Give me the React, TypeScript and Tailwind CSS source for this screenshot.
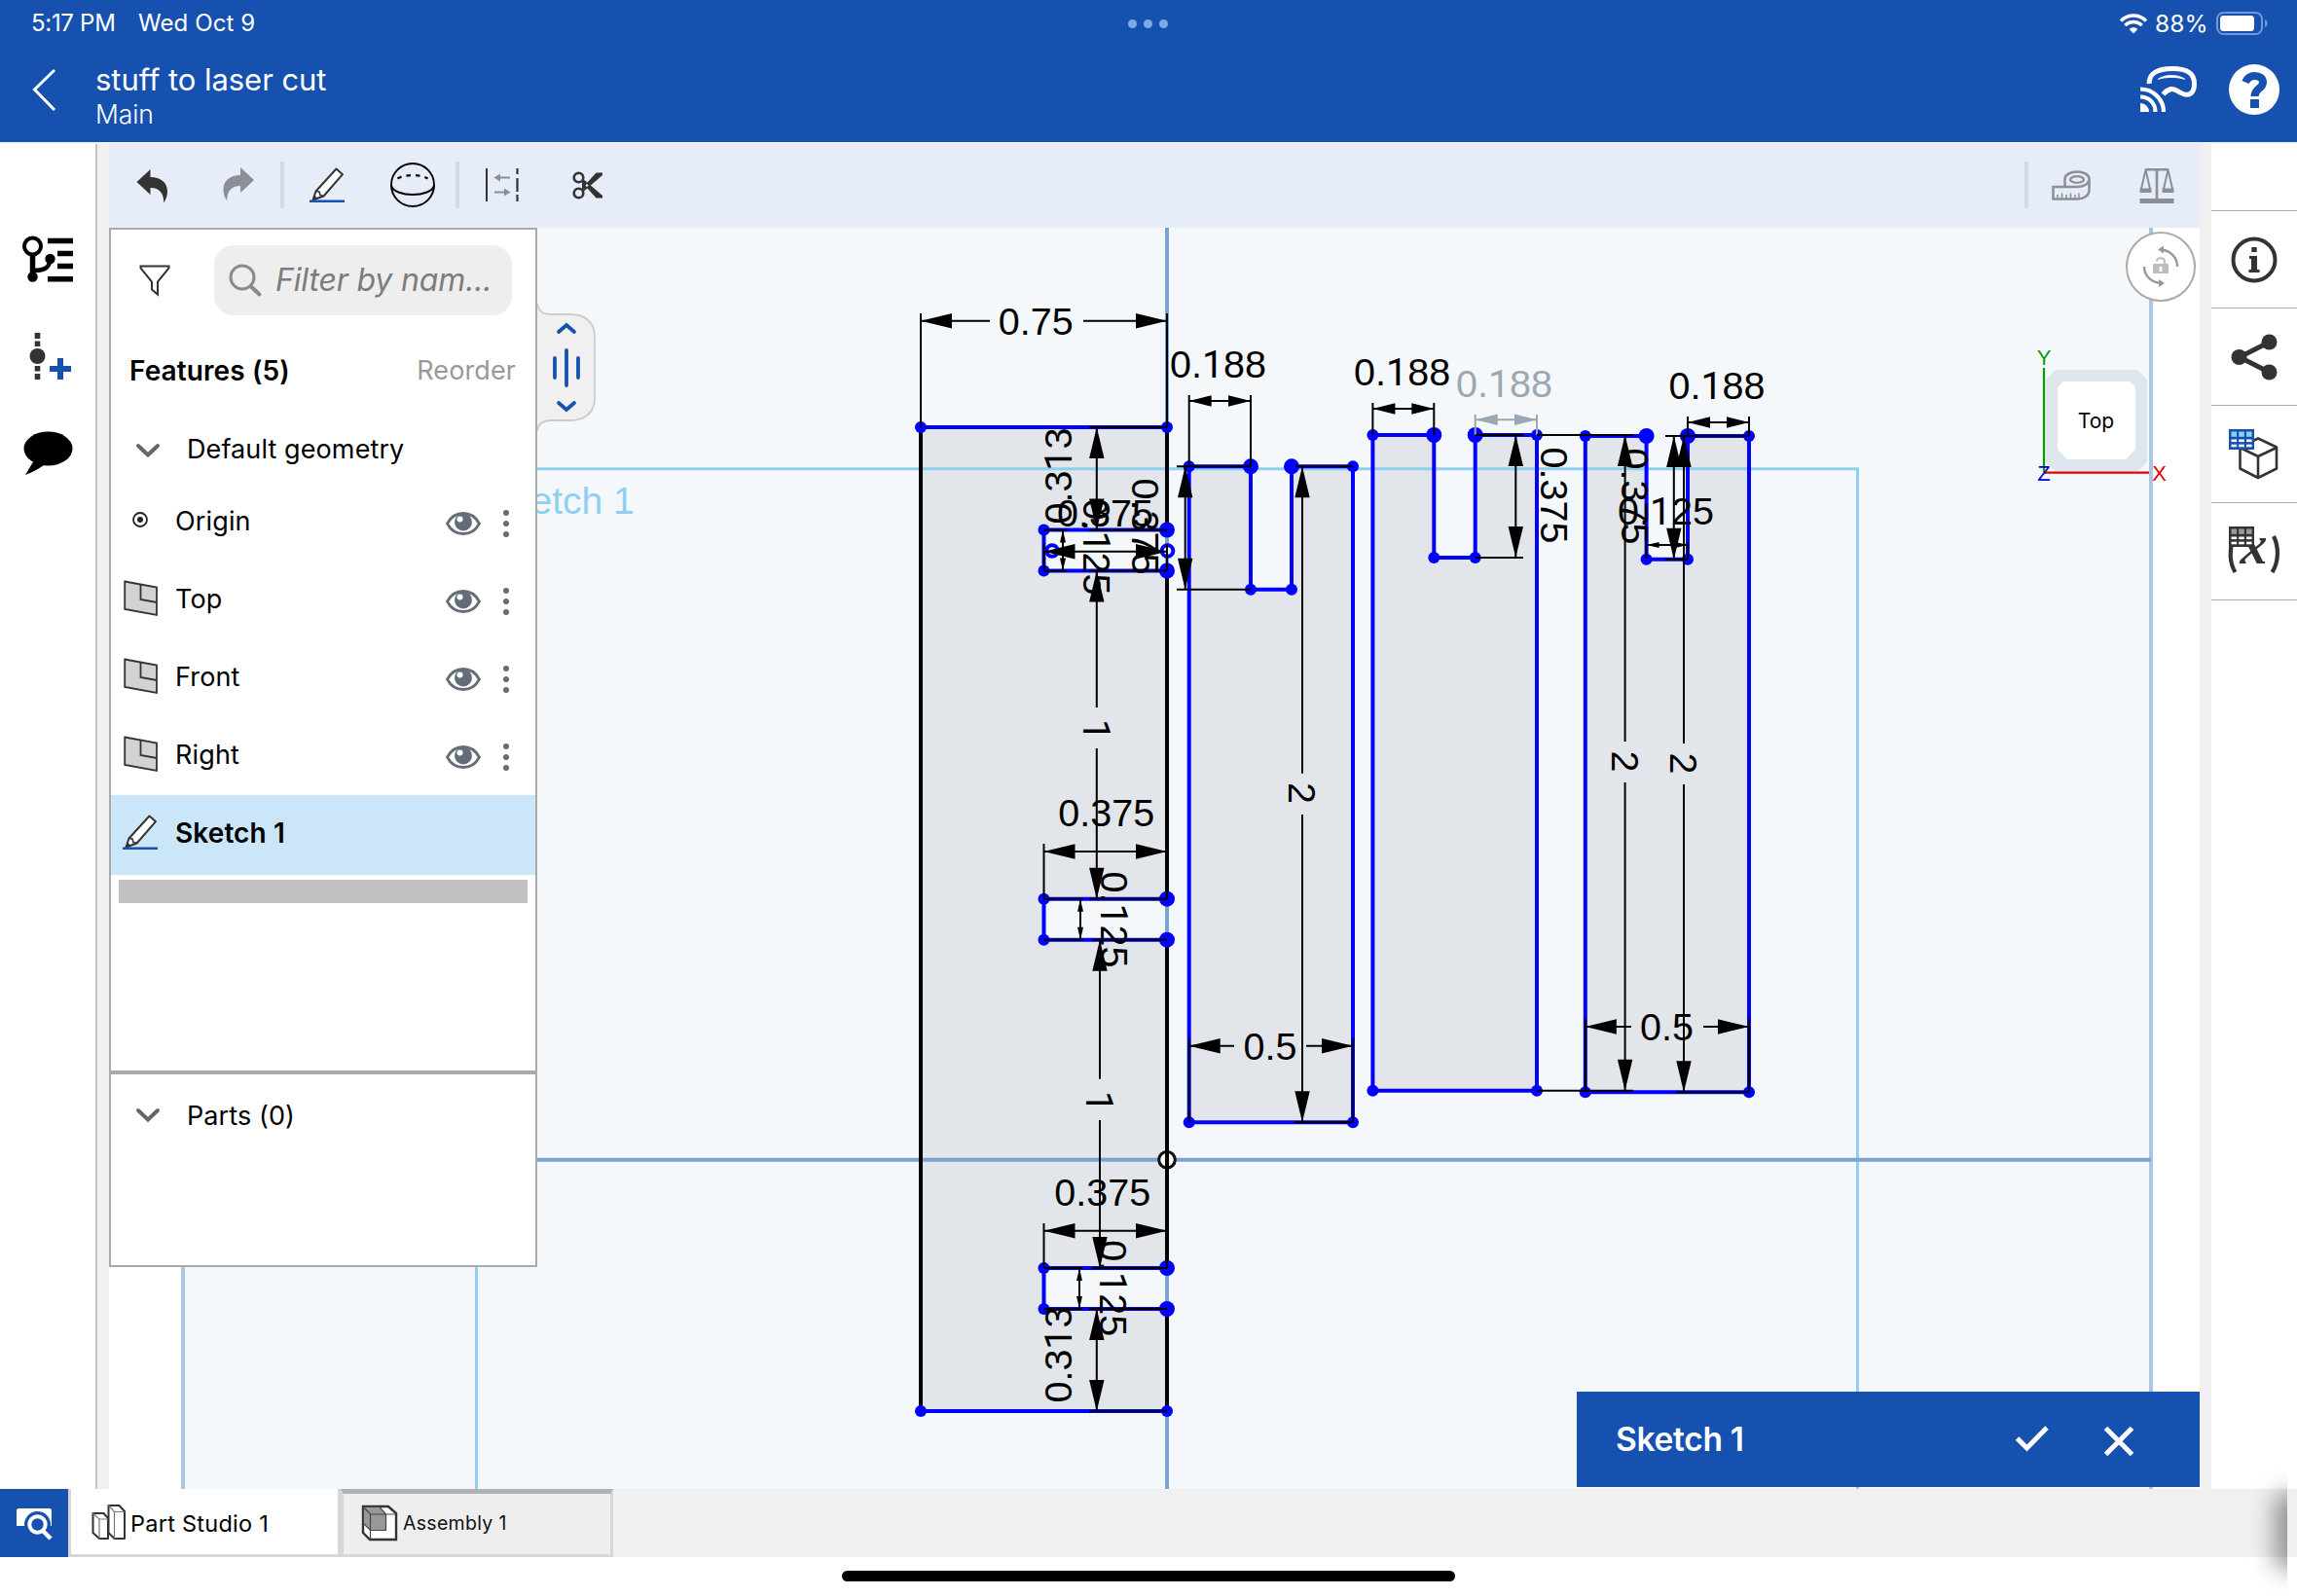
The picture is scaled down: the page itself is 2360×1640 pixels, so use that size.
import type { ReactNode } from "react";

type Pt = [number, number];

/* ---------- Sketch geometry ---------- */

const SLOTS: Pt[] = [
  [544.5, 586.5],
  [923.7, 965.7],
  [1303, 1345],
];

interface Piece {
  l: number;
  nl: number;
  nr: number;
  r: number;
  t: number;
  nb: number;
  b: number;
}

const PIECES: Piece[] = [
  { l: 1221.7, nl: 1285, nr: 1327, r: 1390, t: 479.3, nb: 605.7, b: 1153.3 },
  { l: 1410.4, nl: 1473.3, nr: 1515.7, r: 1579, t: 447, nb: 573, b: 1120.7 },
  { l: 1628.8, nl: 1691.6, nr: 1734, r: 1797, t: 448, nb: 574.7, b: 1122.3 },
];

type Size = "lg" | "sm" | "xs";
const ARROW: Record<Size, Pt> = { lg: [32, 7.7], sm: [23, 5.7], xs: [13, 3] };

interface Dim {
  dir: "h" | "v";
  at: number;
  from: number;
  to: number;
  size: Size;
  gap?: Pt;
  ext: [number, number, number][];
  text: string;
  tx: number;
  ty: number;
  rot?: number;
  color?: string;
}

/* ext entries: [position of the witness line, start, end] */
const DIMS: Dim[] = [
  { dir: "h", at: 329.7, from: 946, to: 1199, size: "lg", gap: [1017, 1113], ext: [[946, 322, 439], [1199, 322, 439]], text: "0.75", tx: 1064.3, ty: 343.5 },
  { dir: "h", at: 412, from: 1221.7, to: 1285, size: "sm", ext: [[1221.7, 406, 479], [1285, 406, 479]], text: "0.188", tx: 1251.5, ty: 388 },
  { dir: "v", at: 1126.8, from: 439, to: 544.5, size: "lg", ext: [[439, 1119, 1199], [544.5, 1119, 1199]], text: "0.313", tx: 1101.3, ty: 489, rot: -90 },
  { dir: "v", at: 1092, from: 544.5, to: 586.5, size: "xs", ext: [[544.5, 1072.5, 1096], [586.5, 1072.5, 1096]], text: "0.125", tx: 1113, ty: 562, rot: 90 },
  { dir: "h", at: 566.7, from: 1072.5, to: 1199, size: "lg", ext: [[1072.5, 559, 586], [1199, 559, 586]], text: "0.375", tx: 1135.5, ty: 541 },
  { dir: "v", at: 1217.7, from: 479.3, to: 605.7, size: "lg", ext: [[479.3, 1209, 1285], [605.7, 1209, 1285]], text: "0.375", tx: 1163.3, ty: 541, rot: 90 },
  { dir: "v", at: 1126.8, from: 586.5, to: 923.7, size: "lg", gap: [727, 769], ext: [[586.5, 1119, 1199], [923.7, 1119, 1199]], text: "1", tx: 1113, ty: 750, rot: 90 },
  { dir: "v", at: 1130, from: 965.7, to: 1303, size: "lg", gap: [1108.7, 1151], ext: [[965.7, 1122, 1199], [1303, 1122, 1199]], text: "1", tx: 1116, ty: 1132, rot: 90 },
  { dir: "h", at: 875, from: 1072.5, to: 1199, size: "lg", ext: [[1072.5, 867, 923.7], [1199, 867, 923.7]], text: "0.375", tx: 1136.7, ty: 849 },
  { dir: "v", at: 1110, from: 923.7, to: 965.7, size: "xs", ext: [[923.7, 1072.5, 1113], [965.7, 1072.5, 1113]], text: "0.125", tx: 1131, ty: 945, rot: 90 },
  { dir: "h", at: 1264.7, from: 1072.5, to: 1199, size: "lg", ext: [[1072.5, 1257, 1303], [1199, 1257, 1303]], text: "0.375", tx: 1132.7, ty: 1238.7 },
  { dir: "v", at: 1109, from: 1303, to: 1345, size: "xs", ext: [[1303, 1072.5, 1112], [1345, 1072.5, 1112]], text: "0.125", tx: 1130, ty: 1323.7, rot: 90 },
  { dir: "v", at: 1126.8, from: 1345, to: 1450, size: "lg", ext: [[1345, 1119, 1199], [1450, 1119, 1199]], text: "0.313", tx: 1101.3, ty: 1392, rot: -90 },
  { dir: "v", at: 1338, from: 479.3, to: 1153.3, size: "lg", gap: [794.7, 837], ext: [[479.3, 1331, 1390], [1153.3, 1330, 1390]], text: "2", tx: 1323.7, ty: 815, rot: 90 },
  { dir: "h", at: 1074.7, from: 1221.7, to: 1390, size: "lg", gap: [1268, 1342], ext: [[1221.7, 1067, 1153], [1390, 1067, 1153]], text: "0.5", tx: 1305, ty: 1089 },
  { dir: "h", at: 420, from: 1410.4, to: 1473.3, size: "sm", ext: [[1410.4, 414, 447], [1473.3, 414, 447]], text: "0.188", tx: 1440.6, ty: 396.3 },
  { dir: "h", at: 431.3, from: 1515.7, to: 1579, size: "sm", ext: [[1515.7, 426, 447], [1579, 426, 447]], text: "0.188", tx: 1545.5, ty: 408, color: "#9ba7b2" },
  { dir: "v", at: 1557.3, from: 447, to: 573, size: "lg", ext: [[447, 1515.7, 1565], [573, 1515.7, 1565]], text: "0.375", tx: 1582.8, ty: 509, rot: 90 },
  { dir: "v", at: 1669.6, from: 447, to: 1120.7, size: "lg", gap: [762, 804], ext: [[447, 1579, 1678], [1120.7, 1579, 1678]], text: "2", tx: 1655.7, ty: 782.5, rot: 90 },
  { dir: "v", at: 1730, from: 448, to: 1122.3, size: "lg", gap: [764, 806], ext: [[448, 1722, 1797], [1122.3, 1722, 1797]], text: "2", tx: 1716, ty: 784.5, rot: 90 },
  { dir: "v", at: 1719.8, from: 448, to: 574.7, size: "lg", ext: [[448, 1711, 1734], [574.7, 1711, 1734]], text: "0.375", tx: 1665.7, ty: 510, rot: 90 },
  { dir: "h", at: 560, from: 1691.6, to: 1734, size: "xs", ext: [[1691.6, 557, 574], [1734, 557, 574]], text: "0.125", tx: 1711.5, ty: 538.7 },
  { dir: "h", at: 434, from: 1734, to: 1797, size: "sm", ext: [[1734, 428, 448], [1797, 428, 448]], text: "0.188", tx: 1764, ty: 410 },
  { dir: "h", at: 1055, from: 1628.8, to: 1797, size: "lg", gap: [1676, 1750], ext: [[1628.8, 1047, 1122], [1797, 1047, 1122]], text: "0.5", tx: 1712.5, ty: 1069.3 },
];

function Dimension({ d }: { d: Dim }) {
  const c = d.color ?? "#000";
  const pt = (a: number): string => (d.dir === "h" ? `${a} ${d.at}` : `${d.at} ${a}`);
  const off = (a: number, o: number): string => (d.dir === "h" ? `${a} ${d.at + o}` : `${d.at + o} ${a}`);
  const [len, half] = ARROW[d.size];
  const main = d.gap
    ? `M${pt(d.from)}L${pt(d.gap[0])}M${pt(d.gap[1])}L${pt(d.to)}`
    : `M${pt(d.from)}L${pt(d.to)}`;
  const ext = d.ext
    .map(([p, a, b]) => (d.dir === "h" ? `M${p} ${a}V${b}` : `M${a} ${p}H${b}`))
    .join("");
  return (
    <g>
      <path d={main + ext} stroke={c} strokeWidth={2} fill="none" />
      <path
        fill={c}
        d={`M${pt(d.from)}L${off(d.from + len, -half)}L${off(d.from + len, half)}ZM${pt(d.to)}L${off(d.to - len, -half)}L${off(d.to - len, half)}Z`}
      />
      <text
        transform={`translate(${d.tx} ${d.ty}) rotate(${d.rot ?? 0})`}
        textAnchor="middle"
        fill={c}
        className="font-['Liberation_Sans',sans-serif] text-[39.5px]"
      >
        {d.text.split("").map((ch, i) =>
          ch === "1" ? (
            <tspan key={i} className="font-[Roboto,sans-serif]">
              1
            </tspan>
          ) : (
            <tspan key={i}>{ch}</tspan>
          ),
        )}
      </text>
    </g>
  );
}

function Dot({ x, y, big }: { x: number; y: number; big?: boolean }) {
  return <circle cx={x} cy={y} r={big ? 8 : 6} fill="#00f" />;
}

function SketchCanvas() {
  const slotPath = SLOTS.map(([a, b]) => `H1199V${a}H1072.5V${b}H1199`).join("");
  return (
    <svg viewBox="112 234 2148 1296" className="block h-full w-full">
      <rect x={112} y={234} width={2148} height={1296} fill="#fff" />
      <rect x={188} y={234} width={2022} height={1296} fill="#f4f8fb" />
      <path d="M188 234V1530M2210 234V1530" stroke="#abc5e3" strokeWidth={4} />
      <text x={500} y={528} fill="#8fd0f2" className="font-['Liberation_Sans',sans-serif] text-[39px]">
        Sketch 1
      </text>
      <path d={`M946 439H1199${slotPath}V1450H946Z`} fill="#e2e5ea" />
      {PIECES.map((p) => (
        <path key={p.l} d={`M${p.l} ${p.t}H${p.nl}V${p.nb}H${p.nr}V${p.t}H${p.r}V${p.b}H${p.l}Z`} fill="#e2e5ea" />
      ))}
      <path d="M489.5 1530V481.7H1908.5V1530" fill="none" stroke="#8fd0f0" strokeWidth={3} />
      <path d="M188 1191.7H2210M1199 234V1530" stroke="#7ba3d0" strokeWidth={4} />

      <path
        d="M946 439V1450M1199 439V544.5M1199 586.5V923.7M1199 965.7V1303M1199 1345V1450"
        stroke="#000"
        strokeWidth={4}
      />
      <g fill="none" stroke="#00f" strokeWidth={4}>
        <path d="M946 439H1199M946 1450H1199" />
        {SLOTS.map(([a, b]) => (
          <path key={a} d={`M1199 ${a}H1072.5V${b}H1199`} />
        ))}
        {PIECES.map((p) => (
          <path key={p.l} d={`M${p.l} ${p.t}H${p.nl}V${p.nb}H${p.nr}V${p.t}H${p.r}V${p.b}H${p.l}Z`} />
        ))}
      </g>
      <Dot x={946} y={439} />
      <Dot x={1199} y={439} />
      <Dot x={946} y={1450} />
      <Dot x={1199} y={1450} />
      {SLOTS.map(([a, b]) => (
        <g key={a}>
          <Dot x={1072.5} y={a} />
          <Dot x={1072.5} y={b} />
          <Dot x={1199} y={a} big />
          <Dot x={1199} y={b} big />
        </g>
      ))}
      {PIECES.map((p) => (
        <g key={p.l}>
          <Dot x={p.l} y={p.t} />
          <Dot x={p.r} y={p.t} />
          <Dot x={p.l} y={p.b} />
          <Dot x={p.r} y={p.b} />
          <Dot x={p.nl} y={p.nb} />
          <Dot x={p.nr} y={p.nb} />
          <Dot x={p.nl} y={p.t} big />
          <Dot x={p.nr} y={p.t} big />
        </g>
      ))}
      <g fill="#f4f8fb" stroke="#00f" strokeWidth={4}>
        <circle cx={1081} cy={566} r={5.8} />
        <circle cx={1199.5} cy={566} r={5.8} />
      </g>
      <circle cx={1199} cy={1191.7} r={8.3} fill="#fff" stroke="#111" strokeWidth={3} />
      <path d="M1199 1180V1204" stroke="#000" strokeWidth={4} />
      {DIMS.map((d, i) => (
        <Dimension key={i} d={d} />
      ))}

      {/* view cube */}
      <path d="M2112 380H2196L2206 390V475L2197 484H2111L2102 475V390Z" fill="#dde5ed" />
      <path d="M2120 392H2188L2194 398V462L2184 472H2124L2114 462V398Z" fill="#fff" />
      <path d="M2100 378V485.7" stroke="#00a000" strokeWidth={2.2} />
      <path d="M2100 485.7H2208" stroke="#e00000" strokeWidth={2.2} />
      <g className="font-['Liberation_Sans',sans-serif] text-[22px]" textAnchor="middle">
        <text x={2100} y={375} fill="#00a000">Y</text>
        <text x={2100} y={493.5} fill="#0000d8">Z</text>
        <text x={2218.5} y={493.5} fill="#e00000">X</text>
      </g>
      <text x={2153.5} y={440} textAnchor="middle" className="font-[Inter,sans-serif] text-[21px]">
        Top
      </text>

      {/* rotation lock */}
      <circle cx={2220} cy={274} r={35} fill="#fff" stroke="#aaa" strokeWidth={2} />
      <g fill="none" stroke="#999" strokeWidth={2.4}>
        <path d="M2237 274C2237 264 2229 257 2220 256.500" />
        <path d="M2203 274C2203 284 2211 290.500 2221 291" />
      </g>
      <path d="M2217 256.500L2223 252.500V260.500ZM2224 291L2218 287V295Z" fill="#999" />
      <rect x={2212} y={271} width={16} height={10} rx={1} fill="#bdbdbd" />
      <path d="M2216 268.500C2216 264 2224 264 2224 268.500V271" fill="none" stroke="#bdbdbd" strokeWidth={2} />
      <path d="M2218.500 274h3v5h-3z" fill="#fff" />
    </svg>
  );
}

/* ---------- Icons ---------- */

interface IcProps {
  w: number;
  h: number;
  children: ReactNode;
  className?: string;
}

function Ic({ w, h, children, className = "" }: IcProps) {
  return (
    <svg width={w} height={h} viewBox={`0 0 ${w} ${h}`} fill="none" className={`block shrink-0 overflow-visible ${className}`}>
      {children}
    </svg>
  );
}

const UNDO = "M0.500 13L14.500 0V8C25 8 32 13.500 32 22.500C32 27 31 30 28.300 34.500C28.300 25 24.500 19 14.500 19V26Z";

function Pencil() {
  return (
    <Ic w={36} h={36}>
      <path d="M27.500 1.500L34 7.200L14.500 29.500L3.500 33.500L6.500 24.500Z" fill="#fff" stroke="#333" strokeWidth={2} strokeLinejoin="round" />
      <path d="M6.500 24.500L10 25L11 28.500L14.500 29.500" stroke="#333" strokeWidth={1.6} />
      <path d="M3 34L5 28.500L8.500 32Z" fill="#333" />
      <path d="M0 34.700H36" stroke="#1651b0" strokeWidth={2.400} />
    </Ic>
  );
}

function Chevron() {
  return (
    <Ic w={26} h={16}>
      <path d="M3 3L13 12.500L23 3" stroke="#666" strokeWidth={4} strokeLinecap="round" />
    </Ic>
  );
}

function Plane() {
  return (
    <Ic w={36} h={38}>
      <path d="M1.200 1.500L34 7.500V36L1.200 30Z" fill="#d2d2d2" stroke="#333" strokeWidth={1.800} />
      <path d="M17.500 4.500V20L34 23" stroke="#333" strokeWidth={1.800} />
    </Ic>
  );
}

function OriginIcon() {
  return (
    <Ic w={36} h={38}>
      <circle cx={17} cy={18} r={7} stroke="#222" strokeWidth={1.800} />
      <circle cx={17} cy={18} r={3} fill="#222" />
    </Ic>
  );
}

function Eye() {
  return (
    <Ic w={36} h={24}>
      <path d="M1.500 12C9 -2 27 -2 34.500 12C27 26 9 26 1.500 12Z" fill="#fff" stroke="#646d77" strokeWidth={2.800} />
      <circle cx={18} cy={10.500} r={9} fill="#646d77" />
      <ellipse cx={14.500} cy={7.500} rx={3} ry={3} fill="#fff" />
    </Ic>
  );
}

function TableGrid({ main, head }: { main: string; head: string }) {
  return (
    <g>
      <rect x={0} y={0} width={26} height={21} fill={main} />
      {[2.5, 10.2, 18].map((x) => (
        <g key={x}>
          <rect x={x} y={2.500} width={5.600} height={5.300} fill={head} />
          <rect x={x} y={10.500} width={5.600} height={2.600} fill="#fff" />
          <rect x={x} y={15.700} width={5.600} height={2.600} fill="#fff" />
        </g>
      ))}
    </g>
  );
}

/* ---------- Bars and panels ---------- */

function Header() {
  return (
    <header className="relative h-[146px] w-full shrink-0 bg-[#1651b0] text-white">
      <div className="flex h-12 items-center pr-[29px] pl-[32px] text-[24px] leading-6">
        <span className="w-[110px] tracking-[-0.3px] whitespace-nowrap">5:17 PM</span>
        <span className="tracking-[0.1px] whitespace-nowrap">Wed Oct 9</span>
        <div className="ml-auto flex items-center">
          <Ic w={28} h={21}>
            <path d="M14 20.500L18.300 16C16 13.700 12 13.700 9.700 16Z" fill="#fff" />
            <path d="M5.300 12C10.300 7.200 17.700 7.200 22.700 12" stroke="#fff" strokeWidth={3.500} />
            <path d="M1 7.500C8.500 0.300 19.500 0.300 27 7.500" stroke="#fff" strokeWidth={3.500} />
          </Ic>
          <span className="ml-[8px] w-[63px] text-[24.5px] tracking-[0.1px]">88%</span>
          <Ic w={54} h={24}>
            <rect x={1} y={1} width={46} height={22} rx={6.500} stroke="#7397d2" strokeWidth={2} />
            <rect x={4} y={4} width={35} height={16} rx={3.500} fill="#fff" />
            <path d="M50 8V16C53.500 14.500 53.500 9.500 50 8Z" fill="#7397d2" />
          </Ic>
        </div>
      </div>
      <div className="flex h-[98px] items-start pr-[18px] pl-[33px]">
        <Ic w={25} h={44} className="mt-[22px]">
          <path d="M23 2L2.500 22L23 43" stroke="#fff" strokeWidth={3} />
        </Ic>
        <div className="mt-[15px] ml-[40px] flex flex-col">
          <span className="text-[31px] leading-[38px] tracking-[-0.05px]">stuff to laser cut</span>
          <span className="text-[26.5px] leading-8 font-light tracking-[-0.1px]">Main</span>
        </div>
        <Ic w={60} h={50} className="mt-[19px] ml-auto">
          <path
            d="M9.200 19C8.500 9 17 3.500 33 3.500C48 3.500 55.500 8 55.500 19C55.500 28 51 32 44 29.500C38 27.500 35.500 23.500 31.500 24.500C28 25.500 26 27 23.500 30"
            stroke="#fff"
            strokeWidth={5}
          />
          <path d="M18 14.500C25 9 39 9 46 14.500C38 11.800 26 11.800 18 14.500Z" fill="#fff" stroke="#fff" strokeWidth={0.800} />
          <path d="M0 48V39C5 39 9 43 9 48Z" fill="#fff" />
          <path d="M0 32.500C9 32.500 15.500 39 15.500 48M0 24.500C13 24.500 24 35 24 48" stroke="#fff" strokeWidth={4.200} />
        </Ic>
        <Ic w={52} h={52} className="mt-[18px] ml-[31px]">
          <circle cx={26} cy={26} r={26} fill="#fff" />
          <path
            d="M17 18.500C19 14 22 12 26.500 12C31.500 12 35 14.500 35 18.500C35 25.500 26.500 24.500 26.500 33"
            stroke="#1651b0"
            strokeWidth={8}
          />
          <rect x={22} y={36} width={9} height={9} fill="#1651b0" />
        </Ic>
      </div>
      <div className="absolute top-[20px] left-[1159px] flex gap-[7px]">
        <span className="size-[9px] rounded-full bg-[#7fa9e6]" />
        <span className="size-[9px] rounded-full bg-[#7fa9e6]" />
        <span className="size-[9px] rounded-full bg-[#7fa9e6]" />
      </div>
    </header>
  );
}

function LeftRail() {
  return (
    <aside className="flex w-[100px] shrink-0 flex-col border-r-2 border-[#c4c4c4] bg-white">
      <Ic w={52} h={48} className="mt-[94px] ml-[23px]">
        <circle cx={10.500} cy={11} r={8.500} stroke="#000" strokeWidth={4} />
        <path d="M10.500 19V41" stroke="#000" strokeWidth={5.500} />
        <path d="M10.500 36C22 36 28 34 28.500 24" stroke="#000" strokeWidth={4.500} />
        <circle cx={10.500} cy={42.500} r={5.200} fill="#000" />
        <circle cx={28.500} cy={24} r={5.200} fill="#000" />
        <path d="M26 5.500H52M36 18.500H52M36 31.500H52M26 44.700H52" stroke="#000" strokeWidth={5.400} />
      </Ic>
      <Ic w={44} h={48} className="mt-[52px] ml-[30px]">
        <path d="M8.500 0V6M8.500 8.500V14M8.500 34V39.500M8.500 42V48" stroke="#333" strokeWidth={5.600} />
        <circle cx={8.500} cy={24} r={8} fill="#333" />
        <path d="M21 37H43M32 26V48" stroke="#1651b0" strokeWidth={6} />
      </Ic>
      <Ic w={52} h={46} className="mt-[53px] ml-[24px]">
        <ellipse cx={25.500} cy={18} rx={25} ry={17.500} fill="#000" />
        <path d="M11 30L2 45C10 42 19 37 22 34Z" fill="#000" />
      </Ic>
    </aside>
  );
}

function Toolbar() {
  return (
    <div className="flex h-[86px] shrink-0 items-center bg-[#e6edf8] pb-[2px]">
      <Ic w={32} h={36} className="ml-[28px] mt-[4px]">
        <path d={UNDO} fill="#333" />
      </Ic>
      <Ic w={32} h={36} className="ml-[57px]">
        <path d={UNDO} fill="#8c9096" transform="translate(32.500 0) scale(-1 1)" />
      </Ic>
      <span className="ml-[27px] h-12 w-1 bg-[#cfdce7]" />
      <span className="ml-[26px]">
        <Pencil />
      </span>
      <Ic w={46} h={46} className="ml-[47px]">
        <circle cx={23} cy={23} r={22} stroke="#000" strokeWidth={1.900} />
        <path d="M1 24C5 36 41 36 45 24" stroke="#000" strokeWidth={2.200} />
        <path d="M7.500 16.500C14 12 32 12 38.500 16.500" stroke="#000" strokeWidth={2.200} strokeDasharray="4.500 5" />
      </Ic>
      <span className="ml-[21px] h-12 w-1 bg-[#cfdce7]" />
      <Ic w={36} h={34} className="ml-[26px]">
        <path d="M2 0V34" stroke="#333" strokeWidth={2} />
        <path d="M33.500 0V6M33.500 10V24M33.500 27V34" stroke="#333" strokeWidth={2.200} />
        <path d="M26 9.500H13M10 24.500H22" stroke="#8a8e94" strokeWidth={2} />
        <path d="M9.500 9.500L16 5.500V13.500ZM26.500 24.500L20 20.500V28.500Z" fill="#8a8e94" />
      </Ic>
      <Ic w={32} h={30} className="ml-[54px] mt-[1px]">
        <circle cx={6.500} cy={6.500} r={4.800} stroke="#333" strokeWidth={2.600} />
        <circle cx={6.500} cy={22.500} r={4.800} stroke="#333" strokeWidth={2.600} />
        <path d="M10 9.500L15 12L24.500 1.500H31V4L12.500 20L10 19.500Z" fill="#333" />
        <path d="M10 19.500L15 17L24.500 27.500H31V25L12.500 9L10 9.500Z" fill="#333" />
        <circle cx={15} cy={14.500} r={1.300} fill="#e6edf8" />
      </Ic>
      <span className="ml-auto h-12 w-1 bg-[#cfdce7]" />
      <Ic w={40} h={32} className="ml-[24px] mt-[1px]">
        <path d="M13.500 16V9C13.500 4.500 19 1.500 26 1.500S38.500 4.500 38.500 9V20C38.500 26 33 29.500 26 29.500H1.500V17H26C33 17 38.500 13.500 38.500 9" stroke="#8c9096" strokeWidth={2.500} />
        <ellipse cx={26} cy={9.500} rx={7} ry={3.300} stroke="#8c9096" strokeWidth={2.300} />
        <path d="M6 29V25M10.500 29V23.500M15 29V25M19.500 29V23.500M24 29V25M28 29V23.500" stroke="#8c9096" strokeWidth={1.500} />
      </Ic>
      <Ic w={36} h={38} className="ml-[50px] mr-[26px] mt-[2px]">
        <path d="M6 2.200H30M18 2V33" stroke="#8c9096" strokeWidth={2.600} />
        <path d="M6.500 2.500L2 22M6.500 2.500L11 22M29.500 2.500L25 22M29.500 2.500L34 22" stroke="#8c9096" strokeWidth={2} />
        <path d="M0.500 21.500H12.500V26H0.500ZM23.500 21.500H35.500V26H23.500ZM0.500 32H35.500V37H0.500Z" fill="#8c9096" />
      </Ic>
    </div>
  );
}

function FeatureRow({ icon, label }: { icon: ReactNode; label: string }) {
  return (
    <div className="flex h-20 items-center pl-[13px]">
      <span className="mt-[-4px] w-[53px]">{icon}</span>
      <span className="mt-[-2px] text-[27px] tracking-[0.15px]">{label}</span>
      <span className="mt-[1px] ml-auto">
        <Eye />
      </span>
      <span className="mt-[1px] mr-[27px] ml-[23px] flex flex-col gap-[5px]">
        <i className="size-[6px] rounded-full bg-[#646d77]" />
        <i className="size-[6px] rounded-full bg-[#646d77]" />
        <i className="size-[6px] rounded-full bg-[#646d77]" />
      </span>
    </div>
  );
}

function FeaturePanel() {
  return (
    <div className="absolute top-0 left-0 flex h-[1068px] w-[440px] flex-col border-2 border-[#aaa] bg-white text-black">
      <div className="flex h-[108px] items-center pr-[24px] pb-[4px] pl-[29px]">
        <Ic w={32} h={32}>
          <path d="M1.500 1.500H30.500V3.500L19 17.500V30.500L13 25.500V17.500L1.500 3.500Z" stroke="#333" strokeWidth={2} />
        </Ic>
        <div className="ml-auto flex h-[72px] w-[306px] items-center rounded-[20px] bg-[#eeeeee] pl-[15px]">
          <Ic w={35} h={35}>
            <circle cx={14} cy={14} r={12} stroke="#8a8a8a" strokeWidth={3} />
            <path d="M22.500 23L31.500 31.500" stroke="#8a8a8a" strokeWidth={4} strokeLinecap="round" />
          </Ic>
          <span className="ml-[13px] text-[32px] tracking-[-0.15px] whitespace-nowrap text-[#7c7c7c] italic">Filter by nam...</span>
        </div>
      </div>
      <div className="flex h-[72px] items-center justify-between pt-[2px] pr-[20px] pl-[19px] text-[28px]">
        <span className="font-semibold tracking-[0.1px]">Features (5)</span>
        <span className="text-[27px] tracking-[0.1px] text-[#999]">Reorder</span>
      </div>
      <div className="flex h-[81px] items-center pt-[12px] pl-[25px] text-[27px]">
        <Chevron />
        <span className="ml-[27px] tracking-[0.1px]">Default geometry</span>
      </div>
      <FeatureRow icon={<OriginIcon />} label="Origin" />
      <FeatureRow icon={<Plane />} label="Top" />
      <FeatureRow icon={<Plane />} label="Front" />
      <FeatureRow icon={<Plane />} label="Right" />
      <div className="flex h-[82px] items-center bg-[#cbe6f9] pl-[12px]">
        <span className="-mt-[7px] w-[54px]">
          <Pencil />
        </span>
        <span className="-mt-[5px] text-[28px] font-semibold tracking-[0.1px]">Sketch 1</span>
      </div>
      <div className="mx-[8px] mt-[5px] h-6 bg-[#c1c1c1]" />
      <div className="mt-auto h-1 shrink-0 bg-[#aaa]" />
      <div className="flex h-[196px] shrink-0 items-start pt-[25px] pl-[25px] text-[27px] leading-[36px]">
        <span className="mt-[9px]">
          <Chevron />
        </span>
        <span className="ml-[27px] tracking-[0.1px]">Parts (0)</span>
      </div>
    </div>
  );
}

function PanelHandle() {
  return (
    <div className="absolute top-[78px] left-[440px]">
      <Ic w={62} h={132}>
        <path
          d="M0 0C1 8 6 11 14 11H34C50 11 59 20 59 34V97C59 111 50 120 34 120H14C6 120 1 123 0 131"
          fill="#f0f0f0"
          stroke="#ccc"
          strokeWidth={1.800}
        />
        <g stroke="#1651b0" strokeWidth={3.800} strokeLinecap="round">
          <path d="M22 29L30 22L38 29M22 102L30 109L38 102" />
          <path d="M18 56V76M30 48V84M42 56V76" />
        </g>
      </Ic>
    </div>
  );
}

function ConfirmBar() {
  return (
    <div className="absolute right-0 bottom-[2px] flex h-[98px] w-[640px] items-center bg-[#1651b0] pl-[40px] text-white">
      <span className="text-[33.5px] font-semibold tracking-[-0.3px]">Sketch 1</span>
      <Ic w={38} h={30} className="ml-auto">
        <path d="M3.500 14L13.500 24L34 3" stroke="#fff" strokeWidth={5} />
      </Ic>
      <Ic w={32} h={32} className="mr-[67px] ml-[54px] mt-[4px]">
        <path d="M2.500 2.500L29.500 29.500M29.500 2.500L2.500 29.500" stroke="#fff" strokeWidth={5} />
      </Ic>
    </div>
  );
}

function RailCell({ children }: { children: ReactNode }) {
  return <div className="flex h-[100px] items-center justify-center border-t border-[#a8a8a8]">{children}</div>;
}

function RightRail() {
  return (
    <aside className="w-[88px] shrink-0 bg-white pt-[68px]">
      <RailCell>
        <Ic w={48} h={48}>
          <circle cx={24} cy={24} r={21.500} stroke="#333" strokeWidth={4} />
          <path d="M21.300 11H26.700V16H21.300ZM19 20H27V34H29.500V37H18.500V34H21V23H19Z" fill="#333" />
        </Ic>
      </RailCell>
      <RailCell>
        <Ic w={48} h={48}>
          <path d="M9 24L39.500 8.500M9 24L39.500 39.500" stroke="#333" strokeWidth={5} />
          <circle cx={8.500} cy={24} r={8} fill="#333" />
          <circle cx={39.500} cy={8.500} r={8} fill="#333" />
          <circle cx={39.500} cy={39.500} r={8} fill="#333" />
        </Ic>
      </RailCell>
      <RailCell>
        <Ic w={52} h={52}>
          <path d="M30 9.500L49 18.500V40.500L30 50L11.500 40.500V18.500ZM11.500 19L30 28L49 19M30 28V50" fill="#fff" stroke="#333" strokeWidth={2.600} strokeLinejoin="round" />
          <g>
            <TableGrid main="#1651b0" head="#8ccdf5" />
          </g>
        </Ic>
      </RailCell>
      <RailCell>
        <Ic w={52} h={52}>
          <text x={25.500} y={38} textAnchor="middle" fill="#333" className="font-['Liberation_Serif',serif] text-[56px] leading-none font-bold italic">
            x
          </text>
          <path d="M4 14C0.500 24 0.500 37 6.500 47M46 10C51.500 21 51.500 36 44.500 47" stroke="#333" strokeWidth={4.200} />
          <TableGrid main="#333" head="#999" />
        </Ic>
      </RailCell>
      <div className="border-t border-[#a8a8a8]" />
    </aside>
  );
}

function TabBar() {
  return (
    <div className="relative flex h-[70px] w-full shrink-0 bg-[#f0f0f0]">
      <div className="flex w-[70px] items-center justify-center bg-[#1651b0]">
        <Ic w={38} h={36}>
          <path d="M1 5C1 4 2 3 3 3H35C36 3 37 4 37 5V21H1Z" fill="#fff" />
          <circle cx={22.500} cy={19.500} r={13.500} fill="#1651b0" />
          <rect x={26} y={21} width={12} height={12} fill="#1651b0" />
          <circle cx={22.500} cy={19.500} r={8.200} stroke="#fff" strokeWidth={4} />
          <path d="M28 26L36 34" stroke="#fff" strokeWidth={4.500} />
        </Ic>
      </div>
      <div className="flex w-[280px] items-center border-x-[3px] border-b-[3px] border-[#d8d8d8] bg-white pl-[21px]">
        <Ic w={36} h={38}>
          <g stroke="#333" strokeWidth={2} strokeLinejoin="round">
            <path d="M1.500 10H12.500L17 15V36H8L1.500 30Z" fill="#fff" />
            <path d="M17.500 2H28.500L34 8V36H23.500L17.500 30Z" fill="#fff" />
          </g>
          <path d="M1.500 10L8 16H17M8 16V36M17.500 2L23.500 8.500H34M23.500 8.500V36" stroke="#777" strokeWidth={1.200} />
        </Ic>
        <span className="mt-[4px] ml-[4px] text-[23.5px] tracking-[0.25px]">Part Studio 1</span>
      </div>
      <div className="flex w-[280px] items-center border-x-[3px] border-t-[5px] border-b-[3px] border-x-[#d8d8d8] border-t-[#b1b1b1] border-b-[#d8d8d8] bg-[#eee] pl-[18px]">
        <Ic w={38} h={38} className="-mt-[2px]">
          <path d="M2 2H28L36 9V36H9L2 29Z" fill="#fff" stroke="#333" strokeWidth={2.400} />
          <path d="M2.500 2.500H19L25.500 10V26.500H9.500L2.500 19.500Z" fill="#999" stroke="#444" strokeWidth={1.200} />
          <path d="M2.500 2.500L9.500 10H35M9.500 10V36" stroke="#444" strokeWidth={1.200} />
        </Ic>
        <span className="ml-[5px] text-[19.5px] tracking-[0.3px] text-[#111]">Assembly 1</span>
      </div>
      <div className="pointer-events-none absolute top-[-20px] right-[10px] h-[130px] w-[50px] overflow-hidden">
        <div className="ml-[50px] h-[52px] w-[60px] translate-y-[36px] shadow-[0_2px_22px_13px_rgba(0,0,0,0.38)]" />
      </div>
    </div>
  );
}

export default function App() {
  return (
    <div className="flex h-[1640px] w-[2360px] flex-col overflow-hidden bg-white font-[Inter,sans-serif]">
      <Header />
      <div className="h-[2px] shrink-0 bg-[#eef3fb]" />
      <main className="flex h-[1382px] shrink-0">
        <LeftRail />
        <div className="w-[12px] shrink-0 bg-[#f0f0f0]" />
        <div className="flex w-[2148px] shrink-0 flex-col">
          <Toolbar />
          <div className="relative h-[1296px]">
            <SketchCanvas />
            <PanelHandle />
            <FeaturePanel />
            <ConfirmBar />
          </div>
        </div>
        <div className="w-[12px] shrink-0 bg-[#f0f0f0]" />
        <RightRail />
      </main>
      <TabBar />
      <div className="flex h-[40px] shrink-0 justify-center pt-[14px]">
        <div className="h-[11px] w-[630px] rounded-full bg-black" />
      </div>
    </div>
  );
}
